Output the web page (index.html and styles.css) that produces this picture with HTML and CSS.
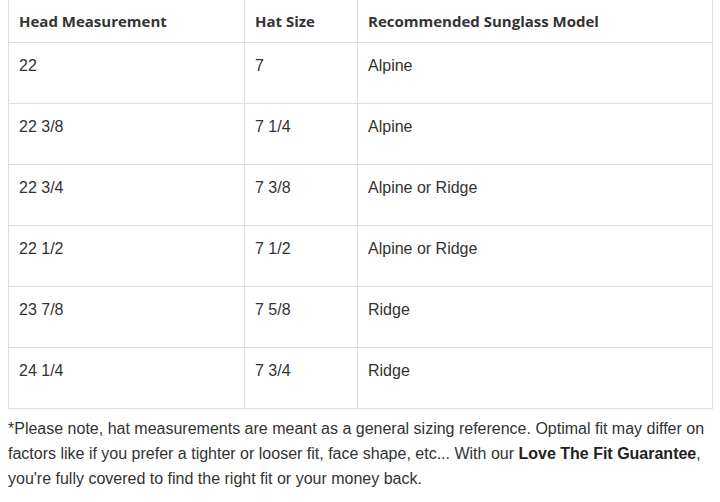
FILE: index.html
```html
<!DOCTYPE html>
<html>
<head>
<meta charset="utf-8">
<link rel="stylesheet" href="styles.css">
</head>
<body>
<table class="size-table">
  <colgroup>
    <col class="c1"><col class="c2"><col class="c3">
  </colgroup>
  <thead>
    <tr><th>Head Measurement</th><th>Hat Size</th><th>Recommended Sunglass Model</th></tr>
  </thead>
  <tbody>
    <tr><td>22</td><td>7</td><td>Alpine</td></tr>
    <tr><td>22 3/8</td><td>7 1/4</td><td>Alpine</td></tr>
    <tr><td>22 3/4</td><td>7 3/8</td><td>Alpine or Ridge</td></tr>
    <tr><td>22 1/2</td><td>7 1/2</td><td>Alpine or Ridge</td></tr>
    <tr><td>23 7/8</td><td>7 5/8</td><td>Ridge</td></tr>
    <tr><td>24 1/4</td><td>7 3/4</td><td>Ridge</td></tr>
  </tbody>
</table>
<p class="note">*Please note, hat measurements are meant as a general sizing reference. Optimal fit may differ on factors like if you prefer a tighter or looser fit, face shape, etc... With our <strong>Love The Fit Guarantee</strong>, you're fully covered to find the right fit or your money back.</p>
</body>
</html>
```
FILE: styles.css
```css
html, body {
  margin: 0;
  padding: 0;
  background: #fff;
}
body {
  padding: 0 8px;
  font-family: "Liberation Sans", Arial, sans-serif;
  font-size: 16px;
  color: #333;
}
.size-table {
  width: 704px;
  border-collapse: collapse;
  table-layout: fixed;
  border: 1px solid #ddd;
  border-top: 0;
}
.c1 { width: 236px; }
.c2 { width: 113px; }
.c3 { width: 355px; }
.size-table th {
  font-family: "Open Sans", sans-serif;
  font-weight: 700;
  font-size: 15px;
  text-align: left;
  height: 42px;
  padding: 0 10px;
  box-sizing: border-box;
  border-left: 1px solid #ddd;
  border-right: 1px solid #ddd;
  border-bottom: 1px solid #ddd;
  border-top: 0;
  line-height: 20px;
  vertical-align: middle;
  color: #333;
}
.size-table td {
  border: 1px solid #ddd;
  padding: 10px 10px 25px;
  line-height: 25px;
  vertical-align: top;
  color: #333;
}
.note {
  margin: 7px 0 0;
  line-height: 25px;
  color: #333;
}
.note strong {
  font-weight: 700;
  color: #222;
}
```
